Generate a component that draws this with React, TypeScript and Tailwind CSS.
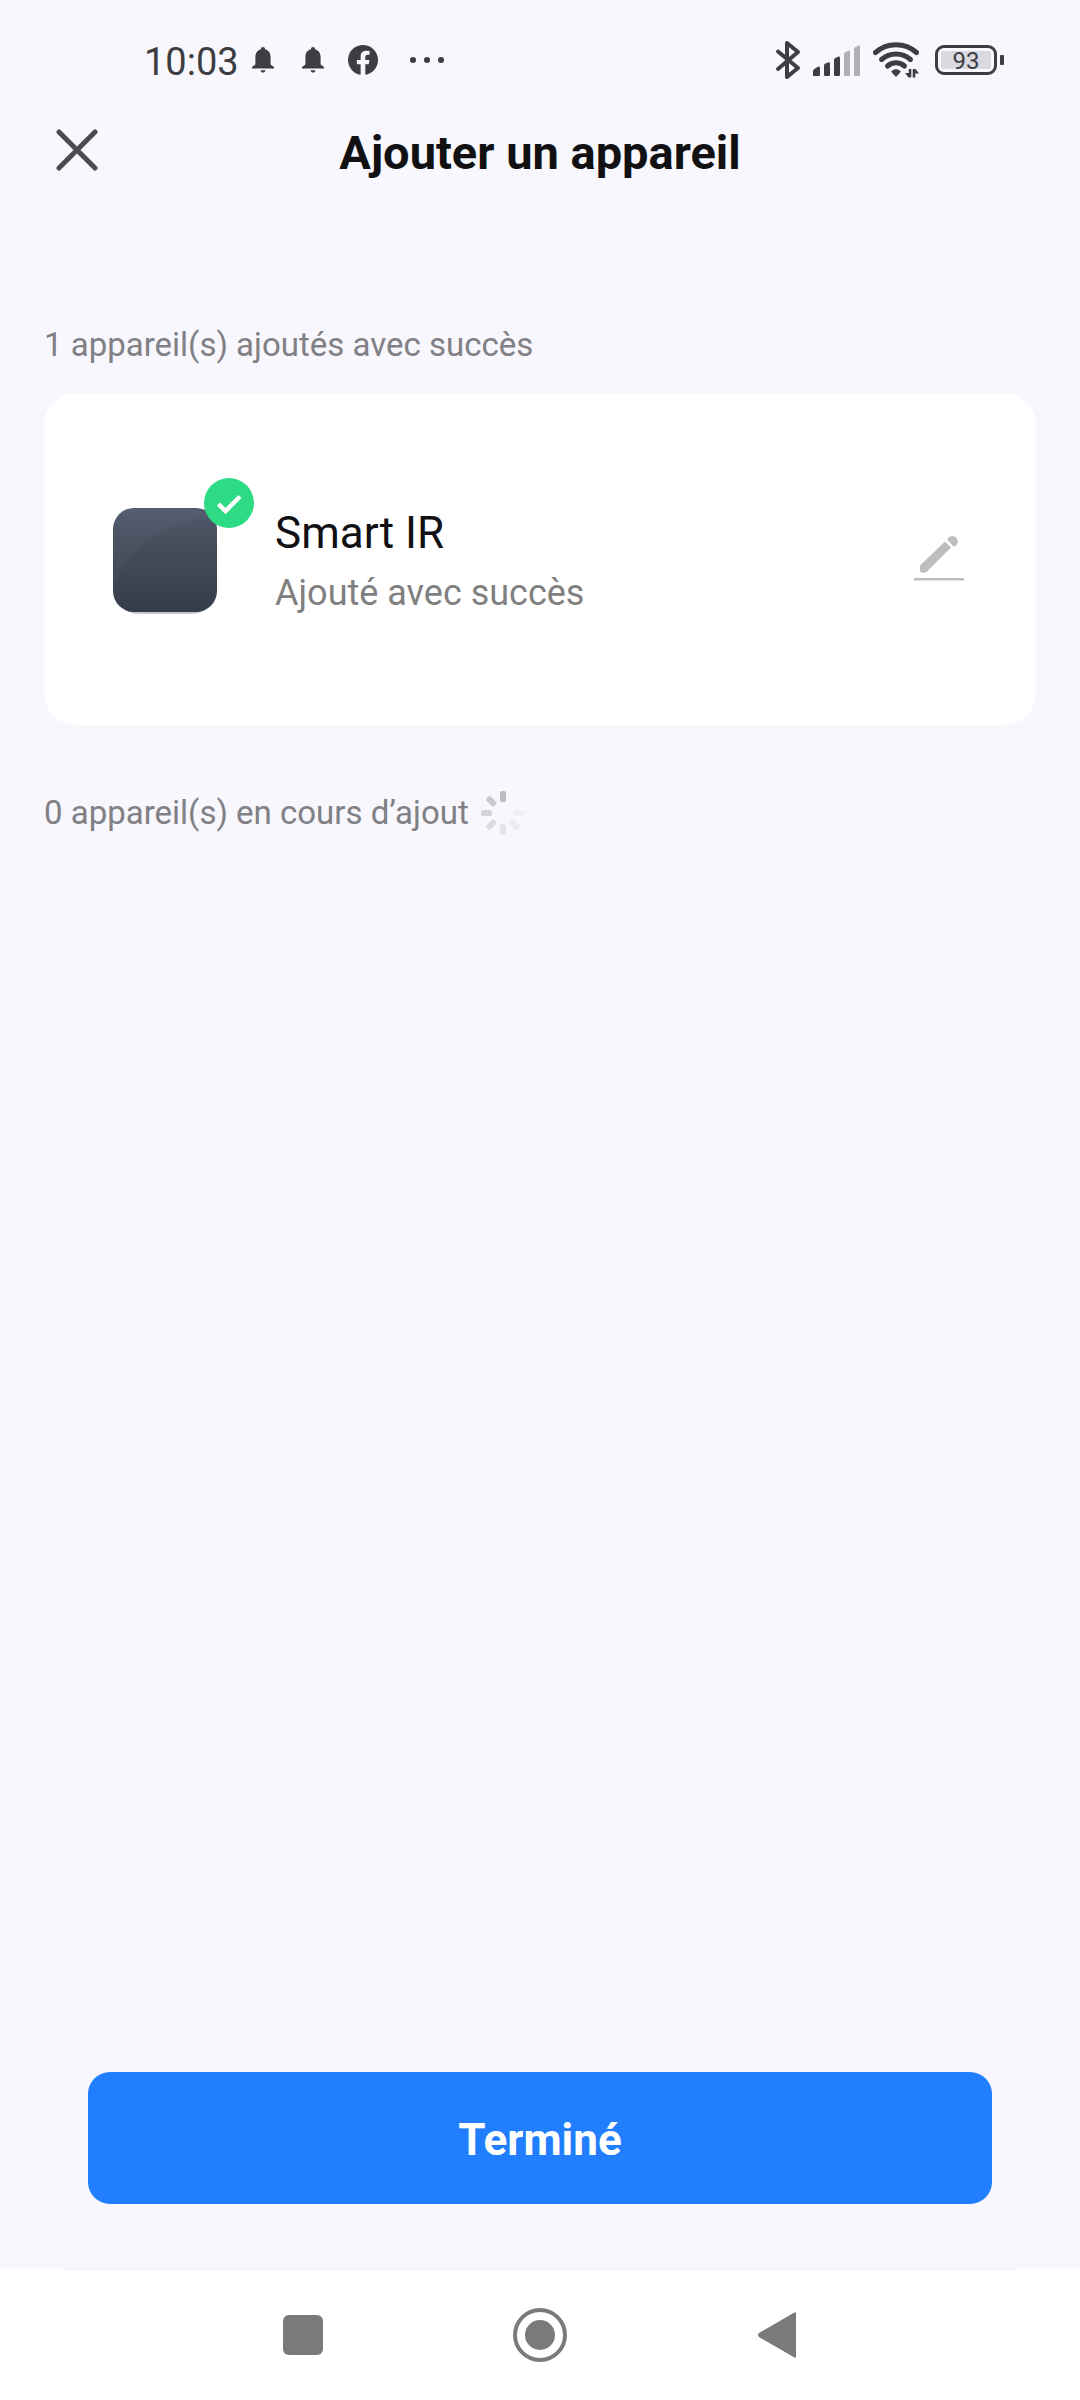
function BellIcon() {
  return (
    <svg className="h-[26px] w-[22px]" viewBox="0 0 22 26" fill="currentColor" aria-hidden="true">
      <path d="M11 0c1.300 0 2 .9 2 2.300C17 3.300 18.600 6.500 18.600 10v7.500L22 20v1.500H0V20l3.400-2.500V10C3.400 6.500 5 3.300 9 2.300 9 .9 9.700 0 11 0z" />
      <path d="M8.500 23.200h5c-.4 1.500-1.300 2.300-2.500 2.300s-2.100-.8-2.500-2.300z" />
    </svg>
  );
}

function FacebookIcon() {
  return (
    <svg className="size-[30px]" viewBox="0 0 24 24" fill="currentColor" aria-hidden="true">
      <path d="M24 12a12 12 0 1 0-13.900 11.860v-8.390H7.080V12h3.020V9.360c0-3 1.790-4.670 4.530-4.670 1.310 0 2.680.24 2.680.24v2.950h-1.510c-1.490 0-1.960.93-1.960 1.870V12h3.330l-.53 3.470h-2.800v8.390A12 12 0 0 0 24 12z" />
    </svg>
  );
}

function DotsIcon() {
  return (
    <svg className="h-[6px] w-[34px]" viewBox="0 0 34 6" fill="currentColor" aria-hidden="true">
      <circle cx="3" cy="3" r="3" />
      <circle cx="17" cy="3" r="3" />
      <circle cx="31" cy="3" r="3" />
    </svg>
  );
}

function BluetoothIcon() {
  return (
    <svg
      className="h-[40px] w-[26px]"
      viewBox="0 0 26 40"
      fill="none"
      stroke="currentColor"
      strokeWidth="4"
      strokeLinecap="round"
      strokeLinejoin="round"
      aria-hidden="true"
    >
      <path d="M3 11.500 23 28 12 37V3l11 9L3 29" />
    </svg>
  );
}

function SignalIcon() {
  return (
    <svg className="h-[32px] w-[48px]" viewBox="0 0 48 32" fill="currentColor" aria-hidden="true">
      <path d="M0 31v-3.500a3 3 0 0 1 1-2.300L4.500 23a1.500 1.500 0 0 1 2.500 1.200V31a1 1 0 0 1-1 1H1a1 1 0 0 1-1-1z" />
      <path d="M11 31V21.500a2 2 0 0 1 1-1.700l3.500-1.600A1.500 1.500 0 0 1 17 19.500V31a1 1 0 0 1-1 1h-4a1 1 0 0 1-1-1z" />
      <path d="M21 31V16a2 2 0 0 1 1-1.700l3.500-1.900A1.500 1.500 0 0 1 27 13.800V31a1 1 0 0 1-1 1h-4a1 1 0 0 1-1-1z" />
      <g fill="#afafb5">
        <path d="M31 31V10a2 2 0 0 1 1-1.700l3.500-1.900A1.500 1.500 0 0 1 37 7.800V31a1 1 0 0 1-1 1h-4a1 1 0 0 1-1-1z" />
        <path d="M41 31V5a2 2 0 0 1 1-1.700l3.500-1.900A1.500 1.500 0 0 1 47 2.800V31a1 1 0 0 1-1 1h-4a1 1 0 0 1-1-1z" />
      </g>
    </svg>
  );
}

function WifiIcon() {
  return (
    <svg className="h-[36px] w-[46px]" viewBox="0 0 46 36" fill="none" stroke="currentColor" aria-hidden="true">
      <g strokeWidth="5" strokeLinecap="round">
        <path d="M2.500 10.500a31 31 0 0 1 41 0" />
        <path d="M8.500 17.500a22 22 0 0 1 29 0" />
        <path d="M14.500 24a13 13 0 0 1 17 0" />
      </g>
      <path d="M18 29.500q5-5 10 0L23 35z" fill="currentColor" stroke="none" />
      <g strokeWidth="2.600">
        <path d="M37 27v8M41 35.500v-8" />
      </g>
      <path d="M38 35.500h-2.500l-3.500-4.500h6zM40 27h2.500l3.500 4.500h-6z" fill="currentColor" stroke="none" />
    </svg>
  );
}

function Battery() {
  return (
    <div className="flex items-center gap-[3px]">
      <div className="flex h-[30px] w-[62px] items-center rounded-[9px] border-3 border-current px-[3px]">
        <div className="flex h-[18px] flex-1 items-center justify-center rounded-[2px] bg-[#d9d9df] pt-[2px] text-2xl leading-6">
          93
        </div>
      </div>
      <div className="h-[10px] w-[4px] rounded-[1px] bg-current" />
    </div>
  );
}

function StatusBar() {
  return (
    <div className="flex h-[120px] items-center justify-between pr-[76px] pl-[144px] text-[#3d3d42]">
      <div className="flex items-center">
        <span className="pt-[4px] text-[38px] leading-none">10:03</span>
        <div className="ml-[13px] flex items-center gap-[28px]">
          <BellIcon />
          <BellIcon />
        </div>
        <div className="ml-6 flex items-center gap-8">
          <FacebookIcon />
          <DotsIcon />
        </div>
      </div>
      <div className="flex items-center gap-[16px]">
        <div className="flex items-center gap-[12px]">
          <BluetoothIcon />
          <SignalIcon />
          <WifiIcon />
        </div>
        <Battery />
      </div>
    </div>
  );
}

function CheckBadge() {
  return (
    <svg className="absolute -top-[30px] left-[91px] size-[50px]" viewBox="0 0 50 50" aria-hidden="true">
      <circle cx="25" cy="25" r="25" fill="#2edb85" />
      <path d="M14.500 26l7 7L36 18.500" fill="none" stroke="#fff" strokeWidth="4.500" />
    </svg>
  );
}

function DeviceIcon() {
  return (
    <svg className="h-[106px] w-[104px]" viewBox="0 0 104 106" aria-hidden="true">
      <defs>
        <linearGradient id="body" x1="0" y1="0" x2="0" y2="1">
          <stop offset="0" stopColor="#505a6b" />
          <stop offset="0.500" stopColor="#434956" />
          <stop offset="1" stopColor="#353c49" />
        </linearGradient>
        <linearGradient id="sheen" x1="0" y1="0" x2="0" y2="1">
          <stop offset="0" stopColor="#7b8aa0" stopOpacity="0.080" />
          <stop offset="1" stopColor="#7b8aa0" stopOpacity="0.060" />
        </linearGradient>
      </defs>
      <rect x="4" y="6" width="96" height="100" rx="21" fill="#c9c9d2" />
      <rect width="104" height="104" rx="21" fill="url(#body)" />
      <path d="M21 0h62q9 0 14 8Q22 22 1 78V21Q1 0 21 0z" fill="url(#sheen)" />
    </svg>
  );
}

function PencilIcon() {
  return (
    <svg className="h-[50px] w-[50px]" viewBox="0 0 50 50" fill="#bdbdbd" aria-hidden="true">
      <path d="M6 38v-6.500L31 7.500l6 6L12.500 38q-2 1.500-6.500 0z" />
      <path d="M33 5.500l2.200-2.200q3.800-2.800 7 .4t.4 7L40 13z" />
      <rect y="44" width="50" height="2.500" />
    </svg>
  );
}

const SPOKES = [
  { angle: 0, opacity: 0.9 },
  { angle: 45, opacity: 0 },
  { angle: 90, opacity: 0.12 },
  { angle: 135, opacity: 0.18 },
  { angle: 180, opacity: 0.3 },
  { angle: 225, opacity: 0.42 },
  { angle: 270, opacity: 0.55 },
  { angle: 315, opacity: 0.7 },
];

function Spinner() {
  return (
    <svg className="size-[46px]" viewBox="0 0 46 46" role="img" aria-label="Chargement">
      {SPOKES.map(({ angle, opacity }) => (
        <rect
          key={angle}
          x="20"
          y="1"
          width="6"
          height="11"
          rx="2"
          fill="#b5b5ba"
          opacity={opacity}
          transform={`rotate(${angle} 23 23)`}
        />
      ))}
    </svg>
  );
}

export default function App() {
  return (
    <div className="flex min-h-screen flex-col bg-[#f7f7fd] font-['Roboto',sans-serif]">
      <StatusBar />

      <header className="grid h-[64px] grid-cols-[1fr_auto_1fr] items-start px-[56px]">
        <button type="button" aria-label="Fermer" className="mt-[9px] justify-self-start text-[#4b4b50]">
          <svg
            className="block size-[42px]"
            viewBox="0 0 42 42"
            fill="none"
            stroke="currentColor"
            strokeWidth="5"
            strokeLinecap="round"
          >
            <path d="M3 3l36 36M39 3L3 39" />
          </svg>
        </button>
        <h1 className="pt-[1px] text-[47px] leading-[64px] font-bold text-[#111113]">Ajouter un appareil</h1>
      </header>

      <main className="flex flex-1 flex-col px-[44px] pt-[137px]">
        <h2 className="text-[33px] leading-[48px] text-[#808085]">1 appareil(s) ajoutés avec succès</h2>

        <section className="mt-[24px] flex items-center rounded-[32px] bg-white py-[104px] pr-[72px] pl-[69px]">
          <div className="relative mt-[4px]">
            <DeviceIcon />
            <CheckBadge />
          </div>
          <div className="ml-[58px] flex flex-1 flex-col pt-[4px]">
            <span className="text-[44px] leading-[64px] text-[#111113]">Smart IR</span>
            <span className="text-[36px] leading-[56px] text-[#808080]">Ajouté avec succès</span>
          </div>
          <button type="button" aria-label="Renommer">
            <PencilIcon />
          </button>
        </section>

        <div className="mt-[64px] flex items-center gap-[11px]">
          <h2 className="text-[33px] leading-[48px] text-[#808085]">0 appareil(s) en cours d’ajout</h2>
          <Spinner />
        </div>
      </main>

      <footer className="px-[88px] pb-[64px]">
        <button
          type="button"
          className="h-[132px] w-full rounded-[22px] bg-[#207eff] pt-[4px] text-[44px] leading-[64px] font-bold text-white"
        >
          Terminé
        </button>
      </footer>

      <nav className="bg-white px-[64px]">
        <div className="grid h-[132px] grid-cols-3 items-center border-t-2 border-[#f0f0f6] px-[120px] text-[#7a7a7a]">
          <button type="button" aria-label="Applications récentes" className="justify-self-center">
            <svg className="block size-[40px]" viewBox="0 0 40 40" fill="currentColor">
              <rect width="40" height="40" rx="6" />
            </svg>
          </button>
          <button type="button" aria-label="Accueil" className="justify-self-center">
            <svg className="block size-[54px]" viewBox="0 0 54 54">
              <circle cx="27" cy="27" r="25" fill="none" stroke="currentColor" strokeWidth="4" />
              <circle cx="27" cy="27" r="15" fill="currentColor" />
            </svg>
          </button>
          <button type="button" aria-label="Retour" className="justify-self-center">
            <svg className="block h-[46px] w-[38px]" viewBox="0 0 38 46" fill="currentColor">
              <path d="M38 1.500v43q0 2-2 .8L1 25q-2-2 0-4L36 .7q2-1.200 2 .8z" />
            </svg>
          </button>
        </div>
      </nav>
    </div>
  );
}
